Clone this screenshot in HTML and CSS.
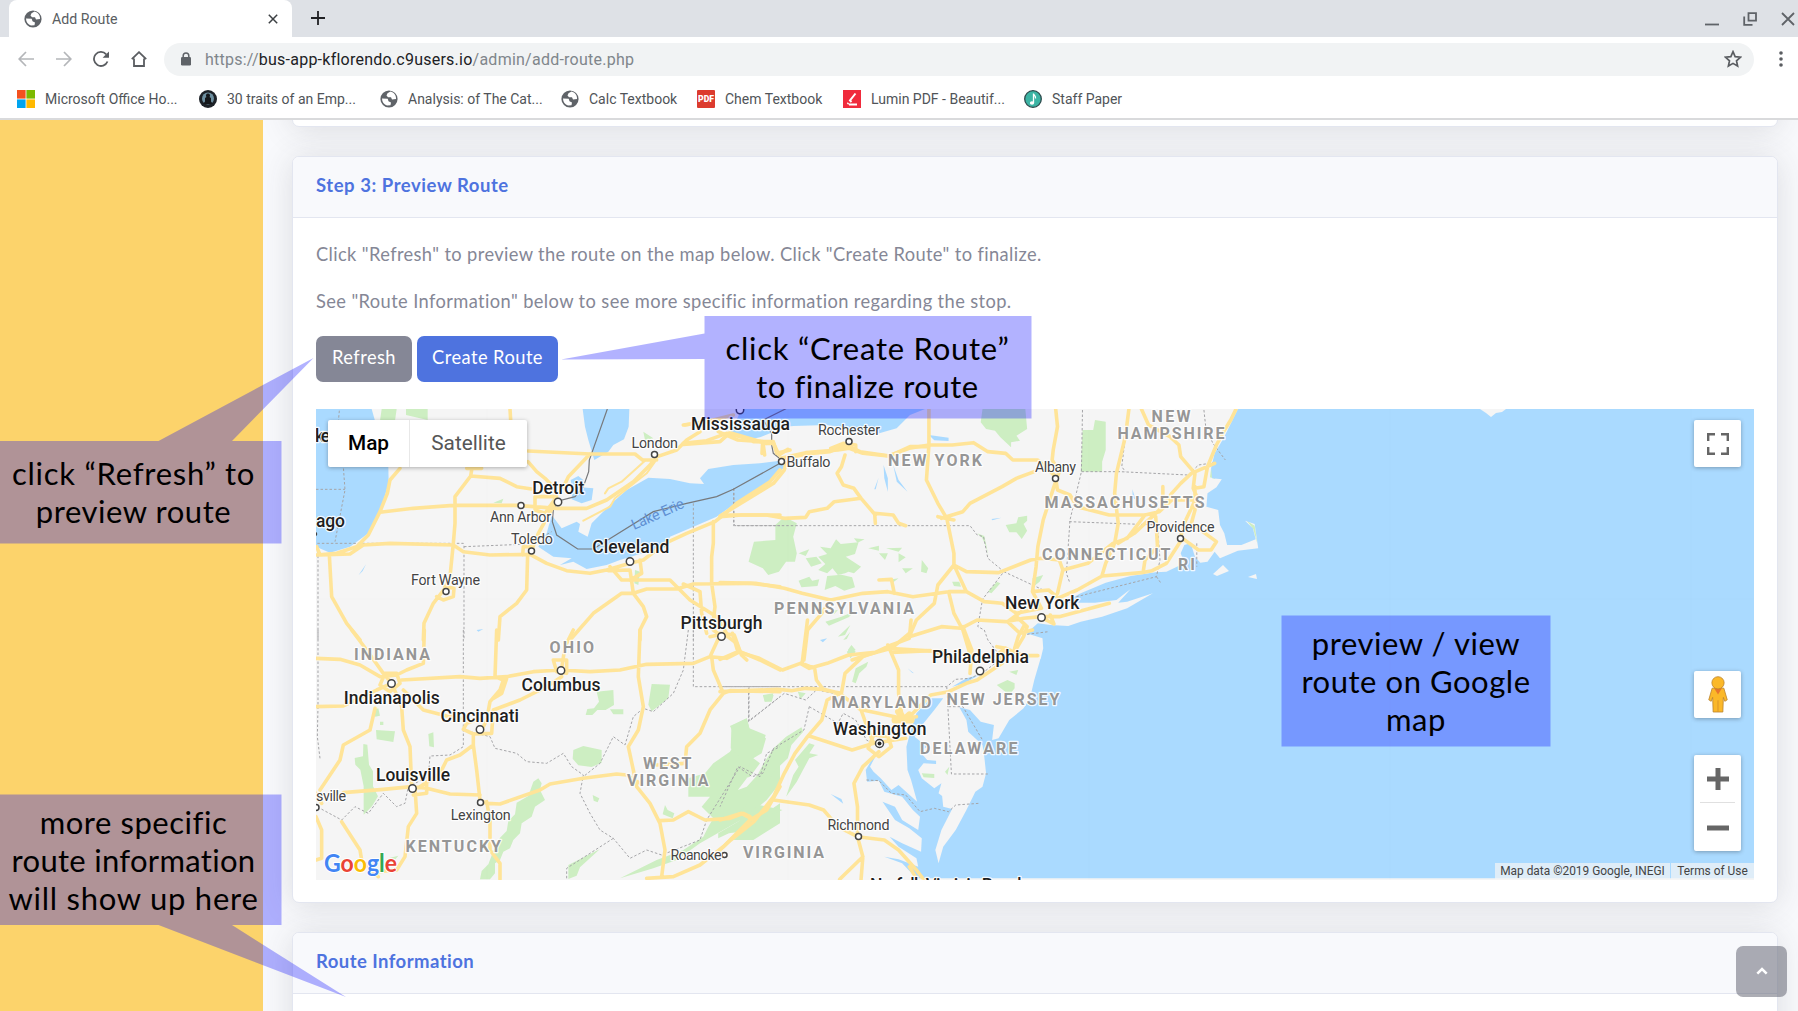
FILE: index.html
```html
<!DOCTYPE html>
<html lang="en">
<head>
<meta charset="utf-8">
<title>Add Route</title>
<link rel="stylesheet" href="styles.css">
</head>
<body>
<svg width="0" height="0" class="defs">
  <symbol id="globe" viewBox="0 0 18 18">
    <circle cx="9" cy="9" r="8.6" fill="#5f6368"/>
    <path d="M10.500 1.600 7.500 3.200 6.500 5.600 8 7.200h3l1 2.200 4-.4c.4-3.200-2-6.600-5.500-7.400zM2 8.500c0 3.500 2 6 5 7l3.500-.3.500-2.700-2.500-1.200-.8-2.600z" fill="#fff"/>
  </symbol>
</svg>

<header class="browser">
  <div class="tabstrip">
    <div class="tab">
      <svg class="favicon"><use href="#globe"/></svg>
      <span class="tab-title">Add Route</span>
      <svg class="tab-close" viewBox="0 0 10 10"><path d="M.8.8 9.200 9.200M9.200.8.8 9.200"/></svg>
    </div>
    <svg class="new-tab" viewBox="0 0 14 14"><path d="M7 0v14M0 7h14"/></svg>
    <div class="window-buttons">
      <svg viewBox="0 0 14 14"><path d="M0 12.500h14"/></svg>
      <svg viewBox="0 0 14 14"><path d="M5.500 1.200h7.500v7.500h-7.500zM1.200 4.500v8.300h8.300"/></svg>
      <svg viewBox="0 0 14 14"><path d="M1 1l12 12M13 1L1 13"/></svg>
    </div>
  </div>
  <div class="toolbar">
    <div class="nav">
      <svg class="off" viewBox="0 0 16 16"><path d="M16 8H1.500M8 1 1.200 8 8 15"/></svg>
      <svg class="off" viewBox="0 0 16 16"><path d="M0 8h14.500M8 1l6.800 7L8 15"/></svg>
      <svg viewBox="0 0 16 16"><path d="M14.500 10.500A7 7 0 1 1 13.200 3.300"/><path class="solid" d="M16 .5v6.300H9.600z"/></svg>
      <svg viewBox="0 0 16 16"><path d="M.8 8.200 8 1.200l7.200 7M3 7.500V15h10V7.500"/></svg>
    </div>
    <div class="omnibox">
      <svg class="lock" viewBox="0 0 10 14"><path d="M2.200 6V3.800a2.800 2.800 0 0 1 5.600 0V6" fill="none" stroke="#5f6368" stroke-width="1.500"/><rect y="5" width="10" height="8.500" rx="1.200" fill="#5f6368"/></svg>
      <span class="url">https://<b>bus-app-kflorendo.c9users.io</b>/admin/add-route.php</span>
      <svg class="star" viewBox="0 0 16 16"><path d="M8 1.500l1.900 4.400 4.800.5-3.600 3.200 1 4.700L8 11.900l-4.100 2.400 1-4.700L1.300 6.400l4.800-.5z"/></svg>
    </div>
    <svg class="menu" viewBox="0 0 4 16"><circle cx="2" cy="2" r="1.800"/><circle cx="2" cy="8" r="1.800"/><circle cx="2" cy="14" r="1.800"/></svg>
  </div>
  <nav class="bookmarks">
    <a class="bm bm-office"><svg viewBox="0 0 18 18"><path fill="#f4511e" d="M0 0h8.600v8.600H0z"/><path fill="#7cb900" d="M9.400 0H18v8.600H9.400z"/><path fill="#00a4ef" d="M0 9.400h8.600V18H0z"/><path fill="#ffb900" d="M9.400 9.400H18V18H9.400z"/></svg><span>Microsoft Office Ho...</span></a>
    <a class="bm bm-traits"><svg viewBox="0 0 18 18"><circle cx="9" cy="9" r="9" fill="#1d2228"/><circle cx="9" cy="8.500" r="6" fill="#6d8fa0"/><path fill="#14171b" d="M9 3.500a2 2 0 0 1 1.500 3.400L12 8v3.500l2 2.500H4l2-2.500V8l1.500-1.100A2 2 0 0 1 9 3.500z"/></svg><span>30 traits of an Emp...</span></a>
    <a class="bm bm-analysis"><svg><use href="#globe"/></svg><span>Analysis: of The Cat...</span></a>
    <a class="bm bm-calc"><svg><use href="#globe"/></svg><span>Calc Textbook</span></a>
    <a class="bm bm-chem"><svg viewBox="0 0 18 18"><rect width="18" height="18" rx="1" fill="#dc3b2e"/><text x="9" y="12" text-anchor="middle" textLength="16" lengthAdjust="spacingAndGlyphs" font-family="Roboto" font-weight="900" font-size="8.500" fill="#fff">PDF</text></svg><span>Chem Textbook</span></a>
    <a class="bm bm-lumin"><svg viewBox="0 0 18 18"><rect width="18" height="18" fill="#f02b3c"/><path d="M12.500 3.500 7 10.500l1.500 1.500M6 14.500h8M4.500 14l1-1" fill="none" stroke="#fff" stroke-width="2"/></svg><span>Lumin PDF - Beautif...</span></a>
    <a class="bm bm-staff"><svg viewBox="0 0 18 18"><circle cx="9" cy="9" r="8.300" fill="#3cb4a4" stroke="#2d4a4c" stroke-width="1.300"/><ellipse cx="8" cy="13" rx="2.200" ry="1.800" fill="#fff"/><path d="M9.500 13V3.500c.3 2 2.600 2.400 2 5" fill="none" stroke="#fff" stroke-width="1.300"/></svg><span>Staff Paper</span></a>
  </nav>
</header>

<div class="page">
  <aside class="sidebar"></aside>
  <main class="content">
    <section class="card card-previous"></section>

    <section class="card">
      <h6 class="card-header"><span class="t-step">Step 3: Preview Route</span></h6>
      <div class="card-body">
        <p><span class="t-p1">Click "Refresh" to preview the route on the map below. Click "Create Route" to finalize.</span></p>
        <p><span class="t-p2">See "Route Information" below to see more specific information regarding the stop.</span></p>
        <div class="actions">
          <button class="btn btn-secondary">Refresh</button>
          <button class="btn btn-primary">Create Route</button>
        </div>
        <div class="map">
          <svg class="map-canvas" viewBox="316 409 1438 471">
            <rect x="316" y="409" width="1438" height="471" fill="#f5f5f5"/>

            <!-- parks and forest -->
            <g class="park">
              <g transform="translate(300 400) scale(.33333)">
                <path d="M245 27h45l-5 35h-45zM318 27h65v33l-65-15zM580 308l30-12-5 14zM1030 95l30 20-25 5z"/>
                <path d="M1005 510l15 5-5 40-12-5z"/>
              </g>
              <g transform="translate(300 630) scale(.33333)">
                <path d="M220 240l15-5 5 22-15 3zM228 300l57 4-5 32-50-8zM385 312l15-5 2 45-14-3zM190 342l12 2 5 60 12 20 0 45 15 30-18 30-25 25v-85l-10-50-15-15-2-20 25-5zM240 275l10 0 0 10-10 0z"/>
                <path d="M890 185l50-5 2 45-25 15-25 0-15 15-20 0 5-18 20-2 15-20zM930 238l40 0 0 15-30 0zM1055 162l55 2-5 40-30 25-20 15-10-20zM820 360l30-12 55 12 0 38-30 13-40-5-17-20z"/>
                <path d="M700 455l15-10 10 15-5 20 15 30-30 20-10 30-30 20-5 30-20 20-10 25-20 10-10 25-15 10 0 30-15 18-30 0 5-25 20-20 15-40 20-40 20-20 5-30 20-20 5-35 35-20zM878 495l20 10-5 12-12-5zM265 685l30-8-10 12zM1095 525l8 15 20 10-5 15-30-12zM805 705l95-48-60 55-10 25-25 10z"/>
                <path d="M1290 288L1340 265 1350 300 1398 325 1385 370 1360 385 1380 400 1350 440 1320 450 1300 500 1360 470 1380 440 1400 390 1440 350 1440 460 1400 510 1340 560 1270 600 1200 640 1130 690 1060 715 960 745 1070 690 1150 660 1210 620 1225 590 1240 565 1205 530 1230 500 1165 500 1165 445 1215 430 1240 400 1290 365 1310 330z"/>
                <path d="M1300 630l60-55 80-55 0 60-80 50zM1390 195l30-5-5 20-20 5z"/>
              </g>
              <g transform="translate(720 400) scale(.35714 .33333)">
                <path d="M735 27h120l5 60-30 20 10 15-25 5 0 15-30-30-15-20-25-5-15-20zM1015 90l30 0 5-30 30 5 0 85-10 35 0 30-60 0zM1375 205l12 32-15-5zM1475 362l22 15 8 55-12-45z"/>
                <path d="M155 375l25-25 35 20-10 40 10 50-5 25-25 0-20 30-30 10-15-20-40-20 15-60 60-5zM220 460l30-12-10 20zM240 475l30-5 15 20-30 10z"/>
                <path d="M280 440L310 445 325 418 338 432 388 427 378 462 352 470 395 500 375 520 360 515 350 520 330 525 315 505 300 520 275 510 295 492 275 470 300 462zM300 528l40-4 30 8 8 30-30 10-25-14-30 12zM220 542l30-12 8 12 20-4-5 20-45 4z"/>
                <path d="M375 415l30 3-20 10zM415 445l30-8 0 15zM445 460l25 0-8 20zM465 445l45-2-10 12zM500 460l20 12-20 15zM565 480l18 25-5 15-15-5zM510 505l30 0-20 15zM470 540l30-5-15 12z"/>
                <path d="M800 375l30-5 5-18 25-5 0 15-10 10 10 20-15 25-15-20-20 0zM650 545l20 0 5 15-20-2zM875 535l30-10-10 20-18 15zM750 575l25-30 10 5-25 30zM720 400l20 8 12 60-8-30-10-25z"/>
                <path d="M300 635l30-5-10 12zM295 665l45-15 40-18-20 20-55 25zM345 720l20-25-10 22zM355 755l15-10 10 10-15 20z"/>
              </g>
              <g transform="translate(720 620) scale(.35714 .33333)">
                <path d="M32 318L75 295 82 325 128 345 118 382 85 405 82 435 60 460 75 475 50 510 75 500 105 465 125 425 150 385 185 350 228 322 233 335 200 375 190 415 150 455 130 495 95 535 55 575 0 610 0 470 35 440 55 410 30 385z"/>
                <path d="M-5 640l55-35 60-50 65 15-70 30-10 30-70 10-30 15zM120 225l30 0-5 20-20 0zM218 215l22 5-15 18zM380 145l35-20-5 15-20 20-10 30-10-5zM185 530l20-65 15-25-10-20 40-50 15 5-15 25 25 5-25 10-15 30-20 40z"/>
                <path d="M330 50l35-35-15 30zM358 90l10-15 12 15-18 10zM775 195l30-15 20 10 0 15-15 20zM810 155l25-5-5 15zM565 460l35 2 0 12-30-2zM630 455l12-15-5 25zM700 570l18-25-8 28z"/>
              </g>
            </g>

            <!-- lakes and ocean -->
            <g class="water">
              <g transform="translate(300 400) scale(.33333)">
                <path d="M48 27H215L237 105 265 200 266 250 240 335 205 400 150 440 90 458 48 440z"/>
                <path d="M848 27H988L986 80 972 118 940 135 925 155 883 180 865 120 855 80z"/>
                <path d="M812 240l23-12 15 12-8 22 38 3-5 35-30 10-30-12 2-30z"/>
                <path d="M755 345L785 385 830 365 840 372 835 395 863 410 875 370 935 310 980 270 1045 233 1110 237 1170 250 1212 252 1200 235 1225 207 1300 195 1380 190 1440 182 1455 200 1410 245 1320 300 1250 350 1170 385 1110 410 1100 440 1010 465 960 480 920 495 860 507 820 485 780 495 815 475 760 470 715 440 740 400z"/>
                <path d="M176 525l22-32-10 20zM530 690l20-3-15 8z"/>
              </g>
              <path transform="translate(560 300) scale(.33333)" d="M545 327L520 380 510 398 560 420 600 412 630 400 640 384 700 378 800 375 870 385 900 400 950 402 1010 385 1050 345 1095 327z"/>
              <g transform="translate(720 400) scale(.35714 .33333)">
                <path d="M585 105l55 8 0 10-40-2zM458 195l12 40 0 40-10-40zM485 195l15 45 25 35-30-30zM432 268l12-35-8 35zM760 357l28-4-25 8zM1155 268l8 30-8-5z"/>
                <path d="M1450 27L1435 60 1410 115 1385 160 1375 205 1378 235 1405 238 1390 262 1365 280 1362 320 1395 330 1400 375 1412 400 1420 435 1460 435 1500 418 1492 385 1470 362 1497 372 1507 445 1450 452 1400 475 1385 455 1365 485 1345 488 1330 470 1318 430 1300 435 1290 460 1300 490 1250 515 1220 517 1150 528 1080 548 1010 580 960 608 1050 608 1110 600 1150 567 1115 608 1140 605 1212 580 1140 625 1070 650 1010 665 975 678 925 675 890 670 858 700 903 715 905 745 897 781H2900V27z"/>
              </g>
              <path transform="translate(720 620) scale(.35714 .33333)" d="M897 118L880 180 868 235 850 265 810 300 780 355 762 360 767 315 730 305 700 270 670 262 690 300 695 335 735 375 740 410 745 460 735 500 715 515 690 570 660 630 625 680 612 730 603 690 620 630 650 567 625 560 622 528 612 520 620 490 600 505 565 475 555 450 570 430 605 432 605 422 580 420 560 395 580 380 545 350 570 310 600 270 625 235 590 235 550 280 532 340 522 380 525 450 535 480 552 545 500 495 480 510 450 475 430 455 420 440 440 400 430 410 408 450 412 485 445 482 460 515 510 530 540 570 560 590 555 630 510 600 490 560 455 545 490 600 530 625 565 655 563 695 510 670 475 650 500 680 550 715 555 740 500 718 460 710 510 730 550 775H2900V118z"/>
              <path transform="translate(720 620) scale(.35714 .33333)" d="M310 522l30 15 5 14zM525 145l18 15-5-2zM650 200l40-25 35-10-40 25zM280 60l20-5-12 12z"/>
            </g>
            <g class="land">
              <path d="M1213 574l10-9 6 6-12 5zM1248 577l8-3 1 5zM1480 409h26l-4 3-6 1-5 4-5-4z"/>
            </g>

            <!-- state and national borders -->
            <g class="border">
              <g transform="translate(300 400) scale(.33333)">
                <path d="M118 32L112 100 130 200 135 270 105 425M48 268H135M52 430L490 430 492 440 492 720M492 440L690 432 755 395M54 440V720M1180 310V720M1302 265V370L1305 377H1440"/>
              </g>
              <g transform="translate(300 630) scale(.33333)">
                <path d="M54 0V230L52 320 60 385M490 0V350L450 375 390 378 385 440 325 470 315 520 290 530 250 490 205 550 165 530 125 570 60 535M490 300L570 320 585 355 650 370 680 395 740 400 790 370 815 410 850 435 840 490 870 550 900 600 940 625 990 685 1040 660 1085 675 1200 630 1220 570 1320 410 1380 440 1400 370 1440 350M1165 0L1150 120 1120 190 1060 245 1030 235 1000 260 975 345 940 320 900 400 850 440M940 625L800 715 800 745M1180 0V170H1440M1347 172V272L1440 200"/>
              </g>
              <g transform="translate(720 400) scale(.35714 .33333)">
                <path d="M38 265V377H700L720 405 738 410 750 475 795 515 735 598 722 680 740 690 750 720 775 755M795 515L915 575M1015 30L1012 215 980 360 970 520 980 550M1012 215L1120 215 1310 225 1340 195 1390 187M1145 30L1135 110 1125 200 1135 215M978 365L1225 375 1232 480 1222 530 980 595M1355 30L1360 80 1380 130 1415 180M1222 530L1235 550M1335 430V500M860 703L920 695"/>
              </g>
              <g transform="translate(720 620) scale(.35714 .33333)">
                <path d="M0 200H635L660 178 700 175 740 155 770 130 765 80M635 200L648 462H750M640 260L680 260 735 360M80 205V305L180 220 240 240 270 210 320 220M250 260L235 330 150 385 120 460 90 470 50 440 0 560M250 260L330 310 345 280 380 300 410 360 445 380M410 480L445 482 480 520 520 525 560 575 600 565 640 575 660 555 725 550"/>
              </g>
            </g>
            <g class="nation">
              <path transform="translate(300 400) scale(.33333)" d="M922 27L868 180 866 215 850 260 825 290 775 303 760 330 757 365 770 405 833 447 880 447 1060 335 1160 310 1250 290 1300 268 1440 190"/>
              <path transform="translate(560 300) scale(.33333)" d="M665 480L640 460 635 435 635 400 610 360 680 325"/>
            </g>

            <!-- highways -->
            <g class="road">
              <g transform="translate(300 400) scale(.33333)">
                <path d="M630 27L632 60M684 153L870 162H1005L1030 182M684 185L710 215 735 235 760 260M870 162L805 230 790 262M300 205L270 240 262 280 240 335 205 405 170 440 110 460 50 465M240 337L340 325 460 316 650 316 770 325 860 325 920 300 1000 245 1050 195 1065 175M1065 172L1130 150 1160 120 1200 95M1030 180H1070M1150 133L1260 125 1290 98M1150 75L1260 60M1290 98L1400 130M500 205H545M515 210L512 228 600 235 650 260 695 267M512 228L465 290 465 370 460 430 450 530 435 565 400 610 372 670 370 720M50 440L60 465 150 462 190 435 270 430 460 435 490 455 570 465 690 463M690 463L740 490 800 512 870 520 920 510 990 490M690 463L715 400 765 310M668 465L670 440 700 440M683 463L680 570 650 610 600 650 595 720M88 465L95 590 140 670 180 720M435 560L462 565 460 590 430 600 410 590M705 330V290H770L735 340 705 330M990 490L1030 480 1095 430 1160 400 1245 365 1270 345 1345 345H1440M1270 345L1310 310 1410 245 1440 210M1240 365V430L1235 470 1235 550 1245 620 1240 660M925 512L990 510 1000 580 965 580 880 640 810 720M930 500L965 540 1110 540 1170 600 1250 650M1020 480L1025 520 990 540M1000 580L1030 620 1040 650 1020 690 1020 720M1000 580L1040 567 1130 567 1180 552 1350 550 1440 560M1150 552L1200 575 1205 640 1220 700M1250 650L1280 700 1230 710"/>
                <path class="thin" d="M850 362L930 320 945 295 1040 220 1065 185M915 280L925 265 965 245 1035 182"/>
              </g>
              <g transform="translate(300 630) scale(.33333)">
                <path d="M155 0L200 60 250 130 275 160 305 230 310 300 330 350 335 470M373 0L370 100 320 120 290 135 240 140 180 105 120 88 48 85M48 230L130 228 230 180 275 160M305 150L480 140 540 145 620 140 700 125 780 120 870 125 960 120 1040 103 1180 100 1230 80 1260 15 1240 0M225 235L210 300 130 345 120 390 60 480M310 180L370 240 440 258 480 265M255 130H290L300 160 270 185 240 165zM590 0L585 140 610 150 600 180 570 215 560 270 545 300M620 145L605 190 580 205M820 0L795 50 785 115M760 90H800V130L770 125zM785 140L740 170 660 210 580 240 575 310 520 312 490 298 500 280 540 265M1020 0L1015 140 1030 230 1015 300 985 350 1000 420 1010 470 1050 520 1080 580 1095 660 1085 740M520 315L520 345 480 375 440 390 420 430 360 470M520 345L530 420 540 510M130 488L250 478 335 470 380 475 450 492 540 495M540 510L560 520 600 522 720 480 750 462 850 445 950 432 980 435 1020 460M345 475L350 550 325 590 315 680 290 720 235 725M340 495L380 490 380 460M48 490L65 520M48 560L65 600V685L48 690M125 575L180 660 185 690 235 740M560 515L570 570 570 660 600 700 600 748M1080 572L1120 570 1165 545 1215 570 1290 565 1330 550 1350 560M1440 470L1400 540 1350 570 1270 650 1200 705 1120 740 1040 745M1235 80L1240 120 1270 190 1230 240 1200 310 1160 350 1155 400 1070 405M1270 190L1290 182 1440 185M1230 80L1280 85 1320 65 1380 90 1440 120M1270 10L1310 40 1320 65"/>
              </g>
              <g transform="translate(560 300) scale(.33333)">
                <path d="M375 375L460 360 520 345M370 430L440 422 500 400 600 425M608 425L606 460M580 425L640 425 650 460 690 450M680 475L740 462 810 455 860 435 900 455 990 468 1050 440 1100 440"/>
              </g>
              <g transform="translate(720 400) scale(.35714 .33333)">
                <path d="M-5 95L50 120 120 125 125 165M120 130H150L165 165 190 148M170 175L240 158 330 150 362 145 400 160 470 168 530 145 585 135 650 135 710 128 750 155 800 160 820 180 890 180 940 230M310 145L345 130 380 135 380 155M585 27L585 135 578 240 610 310 635 355 655 460 655 495M350 165L340 200 328 220 345 255 375 265 395 295 435 345M0 350L60 345 130 345 180 355 240 352 250 335 300 325 320 305 395 295M435 370L433 340 485 345 500 370 520 377M185 190L180 210 150 250 0 348M620 355L680 335 700 310 790 260 830 235 880 215M610 350L655 360M940 27L945 80 933 150 930 180 950 215 935 260 905 360 890 440 885 500 875 575M940 235L945 270 980 285 1000 320 1090 345 1190 345 1230 335 1265 300 1330 300M1145 27L1135 110 1110 220 1105 280 1115 370 1105 430 1080 490 1070 525M1180 27L1200 75 1260 110 1285 135 1290 170 1330 220 1325 265 1335 290 1300 370 1290 410M1445 27L1430 60 1410 95 1390 135 1365 200 1355 260 1330 265M1385 190L1320 220 1290 250 1265 280 1240 320 1160 400 1115 430M1240 260L1240 310M1190 345L1140 415 1100 430 1030 490 960 510 945 580M1330 260V330L1320 370 1390 425 1375 450 1340 450 1295 415 1250 490 1210 512 1180 518 1070 528 1000 570 945 595M1220 350L1225 440 1190 480 1185 515M655 495L690 515 780 518 870 480 900 475 950 480 960 510M655 495L690 575 640 575 540 590 470 575 400 580 310 600 230 580 180 565 100 550 0 548M655 495L610 555 600 610 550 660 530 710M445 540L480 538 488 580M640 575L655 640 680 690 705 780M690 575L740 605 790 610 830 640 900 625 875 575 920 570 960 605M530 710L620 680 675 685 720 660 800 665 850 655 900 650 950 650 1090 610M875 690L840 700 805 665 850 630M830 650L860 680 850 710 825 755M895 650L935 672 925 645M310 600L285 640 245 690 235 780M530 700L480 745 410 765 370 780M470 745L620 755M0 700L40 705 60 765 75 780M775 740L800 745 795 760"/>
              </g>
              <g transform="translate(720 620) scale(.35714 .33333)">
                <path d="M35 40L50 95 0 118M50 95L110 115 175 150 225 130 250 145 300 130 360 105 435 97 480 75 530 55 535 0M245 0L230 130 265 145 270 180 290 210 340 220 350 160 400 110 435 97M470 75L500 150 500 220 510 290M480 97L590 92 640 110M680 20L705 90 700 160M825 85L835 50 850 20M890 107H850L800 85 780 100 790 130 720 180 690 190 640 215 590 225 540 280 500 300M0 215L70 212 160 208 200 212 240 205 290 208 335 220 300 240 285 300 245 350 210 400 180 460 150 530 95 605 30 660 0 690M335 220L395 270 415 330 430 370M400 270L510 295 550 290M250 348L370 390 430 370 520 355M430 345L470 350 480 380 445 410 415 385 430 345M445 395L400 440 375 490 385 560 385 650 400 710 395 778M150 540L250 555 290 570 330 620 385 650 460 660 500 690 550 750 570 778M400 710L335 778M95 600L60 580 0 600M530 740L550 775"/>
                <path class="knot" d="M500 275L515 300 530 285M490 300h45"/>
              </g>
            </g>

            <path class="tile" d="M487 409v471M788 409v471M1089 409v471M1390 409v471M1691 409v471M316 599h1438"/>

            <g class="dot">
              <circle cx="558" cy="502" r="3.700"/><circle cx="521" cy="505.500" r="3"/><circle cx="531.500" cy="551" r="3"/><circle cx="630" cy="561.500" r="3.700"/><circle cx="446" cy="591.500" r="3"/><circle cx="654.500" cy="454.500" r="3"/><circle cx="740" cy="410" r="3.700"/><circle cx="849" cy="441.500" r="3"/><circle cx="781.500" cy="461.500" r="3"/><circle cx="721.500" cy="636.500" r="3.700"/><circle cx="391.500" cy="683.500" r="3.700"/><circle cx="561" cy="670.500" r="3.700"/><circle cx="480" cy="729.500" r="3.700"/><circle cx="412.500" cy="788.500" r="3.700"/><circle cx="480.500" cy="802.500" r="3"/><circle cx="316" cy="807.500" r="3"/><circle cx="724.500" cy="855" r="2.500"/><circle cx="849.500" cy="836.500" r="0"/><circle cx="858.500" cy="836.500" r="3"/><circle cx="980" cy="671" r="3.700"/><circle cx="1041.500" cy="617.500" r="3.700"/><circle cx="1055.500" cy="478.500" r="3"/><circle cx="1180.500" cy="538.500" r="3"/><circle cx="879.500" cy="743.500" r="4"/><circle cx="315" cy="534" r="1.500"/>
            </g>
            <circle cx="879.500" cy="743.500" r="2" fill="#222"/>

            <g class="lbl city">
              <text x="532.300" y="494" textLength="52">Detroit</text>
              <text x="592.300" y="553.300" textLength="77">Cleveland</text>
              <text x="691" y="430" textLength="99">Mississauga</text>
              <text x="680.500" y="628.500" textLength="82">Pittsburgh</text>
              <text x="343.700" y="703.700" textLength="96">Indianapolis</text>
              <text x="521.500" y="690.500" textLength="79">Columbus</text>
              <text x="440.500" y="722" textLength="78.500">Cincinnati</text>
              <text x="376" y="780.500" textLength="74">Louisville</text>
              <text x="833" y="734.500" textLength="93.500">Washington</text>
              <text x="932" y="663" textLength="97">Philadelphia</text>
              <text x="1005" y="609" textLength="74.500">New York</text>
              <text x="316" y="527" textLength="29">ago</text>
              <text x="315" y="442" textLength="15">ke</text>
              <text x="870" y="891" textLength="157">Norfolk Virginia Beach</text>
            </g>
            <g class="lbl town">
              <text x="490" y="521.700" textLength="61">Ann Arbor</text>
              <text x="511" y="543.700" textLength="42">Toledo</text>
              <text x="411" y="585" textLength="69">Fort Wayne</text>
              <text x="631.500" y="448" textLength="46.500">London</text>
              <text x="818" y="435" textLength="62">Rochester</text>
              <text x="786.500" y="466.500" textLength="44">Buffalo</text>
              <text x="450.700" y="820" textLength="60">Lexington</text>
              <text x="316" y="801" textLength="30">sville</text>
              <text x="670.500" y="860" textLength="51">Roanoke</text>
              <text x="827.500" y="830" textLength="62">Richmond</text>
              <text x="1146.500" y="532" textLength="68">Providence</text>
              <text x="1035" y="472" textLength="41">Albany</text>
            </g>
            <g class="lbl state">
              <text x="888" y="466.300" textLength="94">NEW YORK</text>
              <text x="354" y="659.500" textLength="76">INDIANA</text>
              <text x="549.500" y="652.700" textLength="44.500">OHIO</text>
              <text x="405.500" y="852" textLength="95.500">KENTUCKY</text>
              <text x="643" y="769" textLength="48.500">WEST</text>
              <text x="627" y="785.500" textLength="81.500">VIRGINIA</text>
              <text x="743" y="858.300" textLength="81">VIRGINIA</text>
              <text x="831.500" y="708" textLength="100">MARYLAND</text>
              <text x="946.500" y="704.500" textLength="113">NEW JERSEY</text>
              <text x="920" y="753.500" textLength="97.500">DELAWARE</text>
              <text x="774" y="614" textLength="140">PENNSYLVANIA</text>
              <text x="1042" y="559.500" textLength="128.500">CONNECTICUT</text>
              <text x="1178" y="570" textLength="17">RI</text>
              <text x="1044.500" y="508" textLength="160">MASSACHUSETTS</text>
              <text x="1151.500" y="422" textLength="39">NEW</text>
              <text x="1117.500" y="438.500" textLength="107">HAMPSHIRE</text>
            </g>
            <text class="lake" transform="translate(634 530) rotate(-24)" textLength="56">Lake Erie</text>
            <text class="google" x="324" y="871.500" textLength="73" lengthAdjust="spacingAndGlyphs"><tspan fill="#4285f4">G</tspan><tspan fill="#ea4335">o</tspan><tspan fill="#fbbc05">o</tspan><tspan fill="#4285f4">g</tspan><tspan fill="#34a853">l</tspan><tspan fill="#ea4335">e</tspan></text>
          </svg>

          <div class="map-type"><b>Map</b><span>Satellite</span></div>
          <div class="map-btn fullscreen"><svg viewBox="0 0 22 22"><path d="M1.200 8v-6.800h6.800M14 1.200h6.800v6.800M20.800 14v6.800h-6.800M8 20.800h-6.800v-6.800"/></svg></div>
          <div class="map-btn pegman"><svg viewBox="0 0 20 38"><path d="M4 12.500h12l3.500 12-2.500 1.500-1.500-4-.5 15h-10L4.500 22 3 26 .5 24.500z" fill="#fbb829" stroke="#b9812a" stroke-width=".8"/><path d="M6 12.500h8L10 19z" fill="#e8762c"/><path d="M10 25v12" stroke="#d9952a"/><circle cx="10" cy="7" r="6.300" fill="#fbb829" stroke="#b9812a" stroke-width=".8"/></svg></div>
          <div class="zoom">
            <svg viewBox="0 0 22 22"><path d="M11 0v22M0 11h22"/></svg>
            <hr>
            <svg viewBox="0 0 22 22"><path d="M0 11h22"/></svg>
          </div>
          <div class="attribution"><span class="a1">Map data ©2019 Google, INEGI</span><span class="a2">Terms of Use</span></div>
        </div>
      </div>
    </section>

    <section class="card card-info">
      <h6 class="card-header"><span class="t-info">Route Information</span></h6>
      <div class="card-body"></div>
    </section>
  </main>
  <a class="scroll-top"><svg viewBox="0 0 12 8"><path d="M1.300 6.700 6 2l4.700 4.700"/></svg></a>
</div>

<!-- tutorial callouts laid over the page -->
<div class="overlay">
  <svg class="tails" viewBox="0 0 1798 1011">
    <path d="M0 441H158.500L313.500 358 232 441H281.500V543.500H0z"/>
    <path d="M704.500 316H1031.500V418.500H704.500V359L561 359.500 704.500 333.500z"/>
    <path d="M1281.500 615.500H1550.500V746.500H1281.500z"/>
    <path d="M0 794.500H281.500V925H232L346 997 158.500 925H0z"/>
  </svg>
  <div class="callout c-refresh"><span class="l1">click “Refresh” to</span><span class="l2">preview route</span></div>
  <div class="callout c-create"><span class="l1">click “Create Route”</span><span class="l2">to finalize route</span></div>
  <div class="callout c-map"><span class="l1">preview / view</span><span class="l2">route on Google</span><span class="l3">map</span></div>
  <div class="callout c-info"><span class="l1">more specific</span><span class="l2">route information</span><span class="l3">will show up here</span></div>
</div>
</body>
</html>
```
FILE: styles.css
```css
* { box-sizing: border-box; }
html, body { margin: 0; height: 100%; overflow: hidden; }
body {
  display: flex;
  flex-direction: column;
  width: 1798px;
  height: 1011px;
  position: relative;
  font-family: Lato, "Open Sans", sans-serif;
  background: #f8f9fc;
}
.defs { position: absolute; }

/* browser chrome */
.browser {
  position: relative;
  z-index: 2;
  height: 120px;
  background: #fff;
  border-bottom: 2px solid #d9dadc;
  font-family: Roboto, sans-serif;
  flex: none;
}
.tabstrip { display: flex; height: 37px; background: #dee1e6; padding-left: 9px; }
.tab {
  display: flex;
  align-items: center;
  width: 283px;
  height: 37px;
  padding: 0 14px 0 15px;
  background: #fff;
  border-radius: 8px 8px 0 0;
}
.favicon { width: 18px; height: 18px; }
.tab-title { margin-left: 10px; font-size: 14.200px; color: #5a5e62; }
.tab-close { width: 10px; height: 10px; margin-left: auto; stroke: #3c4043; stroke-width: 1.5; }
.new-tab { width: 14px; height: 14px; margin: 11px 0 0 19px; stroke: #202124; stroke-width: 1.8; }
.window-buttons { display: flex; gap: 24px; margin-left: auto; padding: 12px 3px 0 0; }
.window-buttons svg { width: 14px; height: 14px; fill: none; stroke: #5f6368; stroke-width: 1.8; }
.toolbar { display: flex; align-items: center; height: 44px; padding: 0 15px 0 18px; }
.nav { display: flex; gap: 21.500px; width: 146px; }
.nav svg { width: 16px; height: 16px; fill: none; stroke: #5a5d61; stroke-width: 1.8; }
.nav .off { stroke: #b4b6b9; stroke-width: 1.7; }
.nav .solid { fill: #5a5d61; stroke: none; }
.omnibox {
  display: flex;
  align-items: center;
  width: 1590px;
  height: 33px;
  padding: 0 12px 0 17px;
  border-radius: 17px;
  background: #f1f3f4;
}
.lock { width: 10px; height: 14px; }
.url { margin-left: 14px; font-size: 16px; letter-spacing: .24px; color: #80868b; white-space: nowrap; }
.url b { font-weight: 400; color: #202124; }
.star { width: 18px; height: 18px; margin-left: auto; fill: none; stroke: #5a5d61; stroke-width: 1.5; }
.menu { width: 4px; height: 16px; margin-left: auto; fill: #5a5d61; }
.bookmarks { display: flex; height: 35px; padding-left: 17px; align-items: center; }
.bm { display: flex; align-items: center; gap: 10px; font-size: 14px; color: #505458; white-space: nowrap; }
.bm svg { width: 18px; height: 18px; }
.bm-office { width: 182px; }
.bm-traits { width: 181px; }
.bm-analysis { width: 181px; }
.bm-calc { width: 136px; }
.bm-chem { width: 146px; }
.bm-lumin { width: 181px; }

/* page */
.page { position: relative; display: flex; flex: 1; min-height: 0; }
.sidebar { width: 263px; background: #fcd36b; flex: none; }
.content { width: 1535px; padding: 0 20.500px 0 29px; overflow: hidden; }
.card {
  height: 747px;
  margin-bottom: 29px;
  background: #fff;
  border: 1px solid #e3e6f0;
  border-radius: 7px;
  box-shadow: 0 3px 32px rgba(58, 59, 69, .15);
}
.card-previous { height: 48px; margin-top: -41px; }
.card-header {
  display: flex;
  align-items: center;
  height: 61px;
  margin: 0;
  padding: 0 23px 5px;
  background: #f8f9fc;
  border-bottom: 1px solid #e3e6f0;
  border-radius: 6px 6px 0 0;
  font-size: 18.500px;
  font-weight: 700;
  color: #4e73df;
}
.t-step { letter-spacing: .55px; }
.t-info { letter-spacing: .45px; }
.t-p1 { letter-spacing: .37px; }
.t-p2 { letter-spacing: .39px; }
.card-body { padding: 23px 23px 24px; font-size: 18.300px; color: #858796; }
.card-body p { height: 27px; line-height: 27px; margin: 0 0 20px; white-space: nowrap; }
.card-info { height: 200px; }
.actions { display: flex; gap: 5px; padding-top: 1px; }
.btn {
  height: 46px;
  padding: 0 0 5px;
  border: 0;
  border-radius: 7px;
  font: 18.300px Lato, sans-serif;
  color: #fff;
  letter-spacing: .45px;
}
.btn-secondary { width: 96px; background: #858796; }
.btn-primary { width: 141px; background: #4e73df; }

/* map */
.map { position: relative; width: 1438px; height: 471px; margin-top: 27px; overflow: hidden; font-family: Roboto, sans-serif; }
.map-canvas { display: block; width: 1438px; height: 471px; }
.park { fill: #cdeec2; }
.water { fill: #aadaff; }
.land { fill: #f5f5f5; }
.border path, .nation path, .tile { fill: none; vector-effect: non-scaling-stroke; }
.border path { stroke: #a5a5a8; stroke-width: 1; stroke-dasharray: 2.500 2; }
.nation path { stroke: #77797c; stroke-width: 1.200; }
.tile { stroke: #000; stroke-opacity: .012; stroke-width: 1; }
.road path { fill: none; stroke-linejoin: round; stroke-linecap: round; vector-effect: non-scaling-stroke; }
.road { stroke: #ffe498; stroke-width: 3.600; }
.road .thin { stroke-width: 2; }
.road .knot { stroke-width: 7; }
.dot { fill: #fff; stroke: #444; stroke-width: 1.500; }
.lbl { paint-order: stroke; stroke: rgba(255, 255, 255, .85); stroke-width: 2.500px; stroke-linejoin: round; font-family: Roboto, sans-serif; }
.city { font-size: 17.500px; font-weight: 500; fill: #1f1f1f; }
.town { font-size: 14.300px; fill: #444; }
.state { font-size: 16px; font-weight: 700; fill: #969696; }
.lake { font-size: 14.500px; fill: #5f8fd3; }
.google { font: 700 25.500px Lato, sans-serif; paint-order: stroke; stroke: #fff; stroke-width: 2px; }
.map-type {
  position: absolute;
  left: 12px;
  top: 11px;
  display: flex;
  width: 199px;
  height: 47px;
  background: #fff;
  border-radius: 2px;
  box-shadow: 0 1px 4px rgba(0, 0, 0, .3);
  font-size: 20.800px;
  line-height: 46px;
  text-align: center;
}
.map-type b { width: 82px; font-weight: 500; color: #000; border-right: 1px solid #e8e8e8; }
.map-type span { width: 117px; color: #565656; }
.map-btn {
  position: absolute;
  right: 13px;
  display: flex;
  align-items: center;
  justify-content: center;
  width: 47px;
  height: 47px;
  background: #fff;
  border-radius: 2px;
  box-shadow: 0 1px 4px rgba(0, 0, 0, .3);
}
.fullscreen { top: 11px; }
.fullscreen svg { width: 22px; height: 22px; fill: none; stroke: #666; stroke-width: 2.400; }
.pegman { top: 262px; }
.pegman svg { width: 20px; height: 37px; }
.zoom {
  position: absolute;
  right: 13px;
  top: 346px;
  display: flex;
  flex-direction: column;
  align-items: center;
  width: 47px;
  height: 96px;
  padding-top: 13px;
  background: #fff;
  border-radius: 2px;
  box-shadow: 0 1px 4px rgba(0, 0, 0, .3);
}
.zoom svg { width: 22px; height: 22px; stroke: #666; stroke-width: 5; }
.zoom hr { width: 35px; height: 1px; margin: 12px 0 14px; border: 0; background: #e0e0e0; }
.attribution {
  position: absolute;
  right: 0;
  bottom: 0;
  display: flex;
  gap: 1px;
  height: 17px;
  font-size: 11.900px;
  line-height: 16px;
  color: #444;
  white-space: nowrap;
}
.attribution span { background: rgba(245, 245, 245, .7); text-align: center; }
.a1 { width: 175px; }
.a2 { width: 83px; }

.scroll-top {
  position: absolute;
  left: 1736px;
  top: 825.500px;
  display: flex;
  align-items: center;
  justify-content: center;
  width: 51px;
  height: 51px;
  border-radius: 7px;
  background: rgba(90, 92, 105, .5);
}
.scroll-top svg { width: 12px; height: 8px; fill: none; stroke: #fff; stroke-width: 2.500; }

/* callouts */
.overlay { position: absolute; left: 0; top: 0; z-index: 3; width: 1798px; height: 1011px; }
.tails { position: absolute; left: 0; top: 0; width: 1798px; height: 1011px; fill: rgba(0, 0, 255, .3); }
.callout {
  position: absolute;
  display: flex;
  flex-direction: column;
  align-items: center;
  font-size: 31px;
  line-height: 38px;
  letter-spacing: .55px;
  color: #000;
  white-space: nowrap;
}
.c-refresh { left: -8px; width: 283px; top: 454px; }
.c-refresh .l1, .c-create .l1, .c-info .l3 { letter-spacing: .75px; }
.c-create { left: 704px; width: 327px; top: 329px; }
.c-map { left: 1281px; width: 270px; top: 624px; }
.c-info { left: -7px; width: 281px; top: 803px; }
.c-info .l2 { letter-spacing: .3px; }
```
